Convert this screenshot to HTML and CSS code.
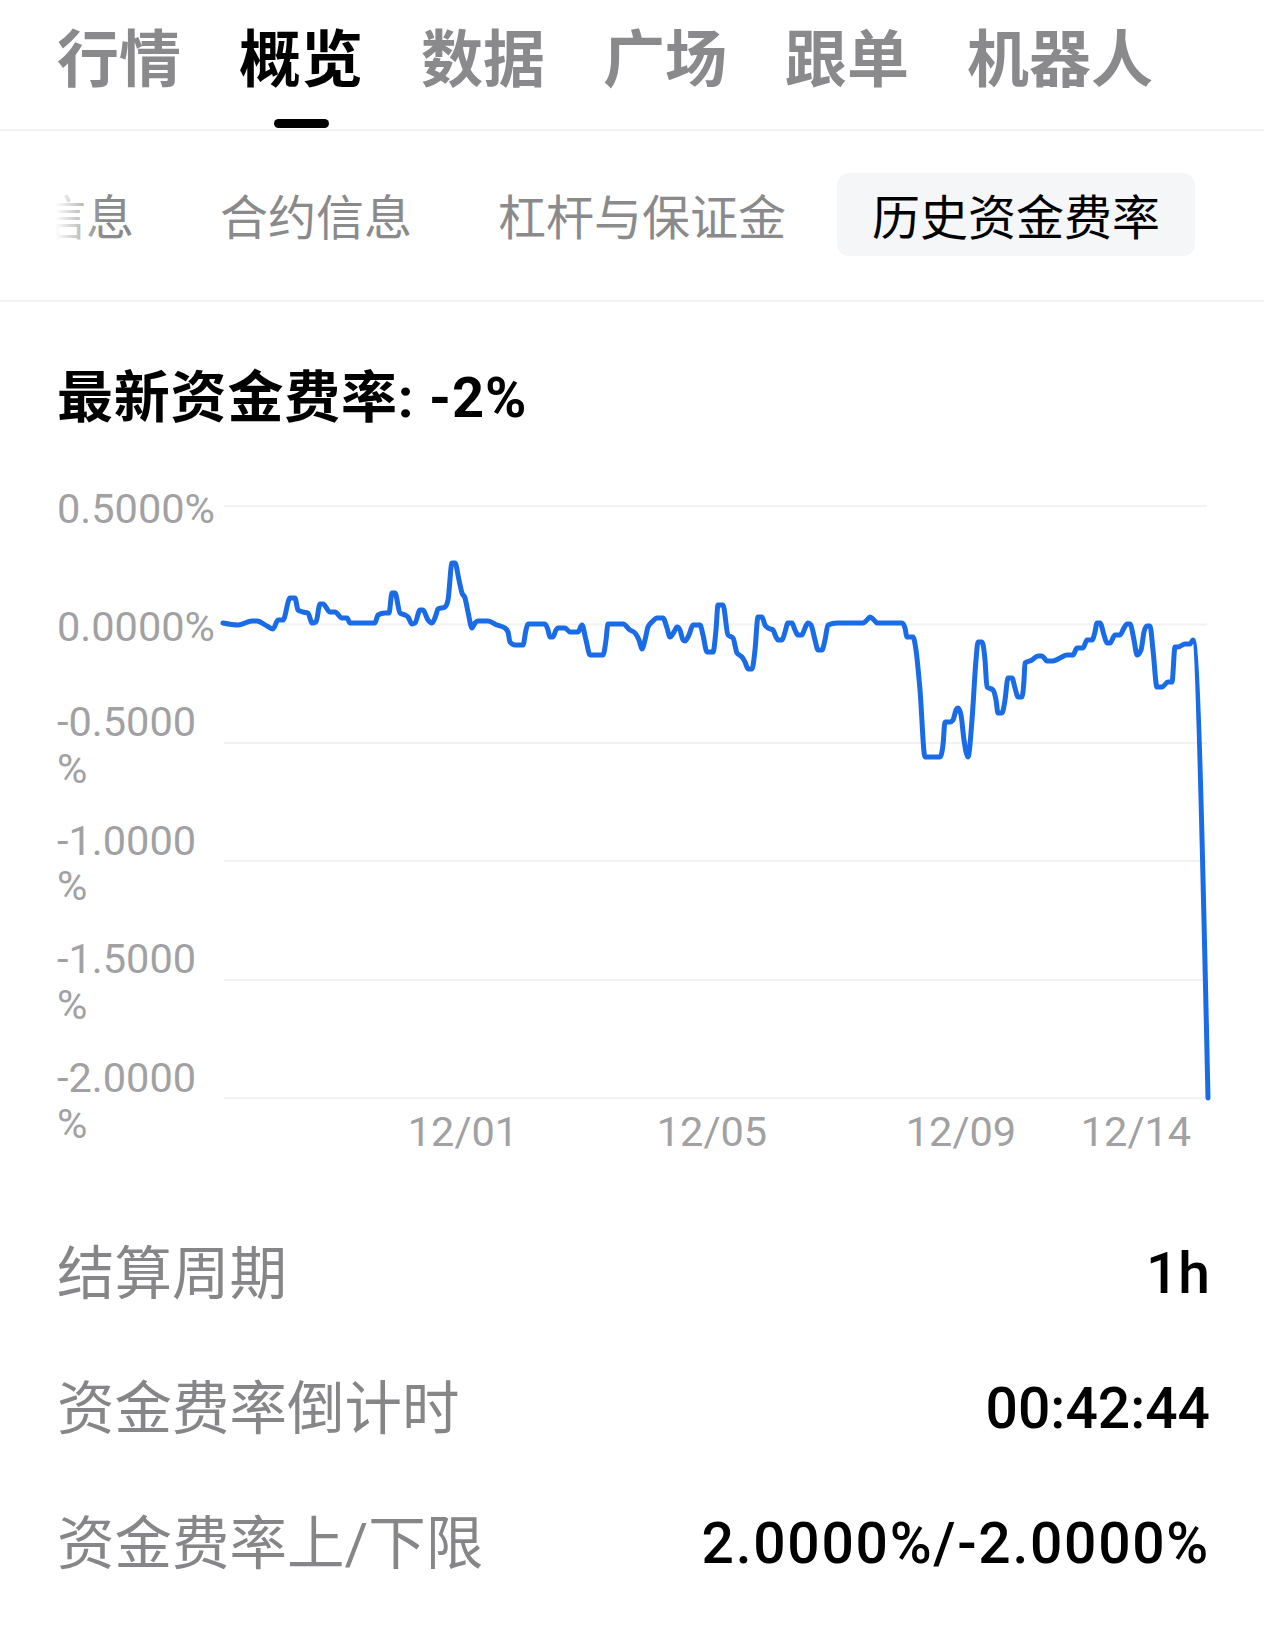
FILE: index.html
```html
<!DOCTYPE html>
<html lang="zh-CN">
<head>
    <meta charset="UTF-8">
    <meta name="viewport" content="width=device-width, initial-scale=1.0">
    <title>历史资金费率</title>
    <link rel="stylesheet" href="styles.css">
</head>
<body>

<!-- Pestañas principales -->
<nav class="main-tabs">
    <a class="main-tab">行情</a>
    <a class="main-tab active">概览</a>
    <a class="main-tab">数据</a>
    <a class="main-tab">广场</a>
    <a class="main-tab">跟单</a>
    <a class="main-tab">机器人</a>
</nav>

<!-- Sub pestañas (desplazadas a la izquierda) -->
<div class="sub-tabs-wrap">
    <div class="sub-tabs">
        <span class="sub-tab">币种信息</span>
        <span class="sub-tab">合约信息</span>
        <span class="sub-tab">杠杆与保证金</span>
        <span class="sub-tab active">历史资金费率</span>
    </div>
</div>

<h2 class="rate-title">最新资金费率: -2%</h2>

<svg class="chart" width="1264" height="720" viewBox="0 440 1264 720">
    <g class="grid">
        <line x1="224" y1="506" x2="1207" y2="506"/>
        <line x1="224" y1="624.5" x2="1207" y2="624.5"/>
        <line x1="224" y1="743" x2="1207" y2="743"/>
        <line x1="224" y1="861" x2="1207" y2="861"/>
        <line x1="224" y1="980" x2="1207" y2="980"/>
        <line x1="224" y1="1098" x2="1207" y2="1098"/>
    </g>
    <g class="axis-label">
        <text x="57" y="523">0.5000%</text>
        <text x="57" y="641">0.0000%</text>
        <text x="57" y="736">-0.5000</text>
        <text x="57" y="783">%</text>
        <text x="57" y="855">-1.0000</text>
        <text x="57" y="900">%</text>
        <text x="57" y="973">-1.5000</text>
        <text x="57" y="1019">%</text>
        <text x="57" y="1092">-2.0000</text>
        <text x="57" y="1138">%</text>
    </g>
    <g class="axis-label x-axis">
        <text x="463" y="1146">12/01</text>
        <text x="712" y="1146">12/05</text>
        <text x="961" y="1146">12/09</text>
        <text x="1136" y="1146">12/14</text>
    </g>
    <path class="rate-line" id="rateLine" data-points="
        223,623 238,625 252,621 257,621 267,626 273,629 278,620 283,620 290,598 295,598 298,610 303,612 308,613
        312,623 316,622 320,604 323,604 330,612 335,612 342,618 347,618 350,623 375,623 378,615 385,613 389,613
        392,593 395,593 400,613 405,615 408,617 412,624 415,623 420,610 423,610 428,620 432,623 436,615 438,609
        445,607 448,600 452,563 455,563 459,580 462,593 465,598 468,612 472,628 475,623 478,621 488,621 497,625
        505,628 508,632 510,642 515,645 523,645 526,630 528,624 545,624 548,630 550,637 553,637 556,630 558,628
        565,628 570,632 578,632 582,625 586,640 590,655 603,655 606,640 608,624 623,624 630,630 635,633 639,640
        642,649 645,640 648,627 652,622 657,618 663,618 667,628 670,637 674,632 677,627 680,630 683,640 685,641
        689,635 693,625 700,625 703,635 707,652 713,652 716,630 718,605 723,605
        728,635 733,638 737,653 742,657 745,662 748,669 752,669 755,650 758,617 762,617 765,625 768,628 773,630
        776,637 778,640 782,640 785,632 788,623 792,623 795,630 798,635 802,635 805,628 808,623 811,625 815,640
        818,650 822,650 825,640 828,625 837,623 863,623 867,620 870,617 874,620 877,623 902,623 905,628 907,637
        913,637 916,650 920,690 925,757 940,757 943,745 945,722 950,722 953,720 956,710 958,708 961,715 964,740
        968,757 972,720 976,660 978,642 982,642 985,660 987,687 993,690 996,700 998,713 1002,713 1005,700
        1008,678 1012,678 1015,688 1018,697 1022,697 1024,680 1025,663 1032,660 1038,656 1042,656 1047,661
        1053,661 1060,658 1067,655 1073,655 1077,648 1083,648 1087,640 1092,640 1095,632 1097,623 1100,623
        1104,635 1107,643 1110,643 1115,635 1120,635 1124,628 1127,624 1130,624 1134,640 1137,655 1141,650
        1144,632 1147,626 1150,626 1153,650 1157,687 1162,687 1168,682 1172,682 1175,647 1178,647 1185,644
        1190,644 1193,640 1208,1098"/>
</svg>

<ul class="info-list">
    <li class="info-row">
        <span class="info-label">结算周期</span>
        <span class="info-value">1h</span>
    </li>
    <li class="info-row">
        <span class="info-label">资金费率倒计时</span>
        <span class="info-value">00:42:44</span>
    </li>
    <li class="info-row">
        <span class="info-label">资金费率上/下限</span>
        <span class="info-value wide">2.0000%/-2.0000%</span>
    </li>
</ul>

<script>
    // Suavizar la línea (interpolación monótona en x)
    function buildSmoothPath(pts) {
        const n = pts.length;
        const t = new Array(n).fill(0);
        for (let i = 1; i < n - 1; i++) {
            const [x0, y0] = pts[i - 1], [x1, y1] = pts[i], [x2, y2] = pts[i + 1];
            const h0 = x1 - x0, h1 = x2 - x1;
            const s0 = (y1 - y0) / h0, s1 = (y2 - y1) / h1;
            const p = (s0 * h1 + s1 * h0) / (h0 + h1);
            t[i] = (Math.sign(s0) + Math.sign(s1)) * Math.min(Math.abs(s0), Math.abs(s1), 0.5 * Math.abs(p)) || 0;
        }
        const slope2 = (a, b, tt) => (3 * (b[1] - a[1]) / (b[0] - a[0]) - tt) / 2;
        t[0] = slope2(pts[0], pts[1], t[1]);
        t[n - 1] = slope2(pts[n - 2], pts[n - 1], t[n - 2]);

        let d = `M${pts[0][0]},${pts[0][1]}`;
        for (let i = 0; i < n - 1; i++) {
            const [x0, y0] = pts[i], [x1, y1] = pts[i + 1];
            const dx = (x1 - x0) / 3;
            d += `C${x0 + dx},${y0 + dx * t[i]} ${x1 - dx},${y1 - dx * t[i + 1]} ${x1},${y1}`;
        }
        return d;
    }

    const line = document.getElementById('rateLine');
    const points = line.dataset.points.trim().split(/\s+/).map(p => p.split(',').map(Number));
    line.setAttribute('d', buildSmoothPath(points));
</script>

</body>
</html>
```

FILE: styles.css
```css
body {
    margin: 0;
    background-color: #fff;
    color: #000;
    font-family: Roboto, "Noto Sans CJK SC", sans-serif;
}

/* Pestañas principales */
.main-tabs {
    display: flex;
    gap: 58px;
    padding: 30px 57px 0;
    border-bottom: 2px solid #f2f2f4;
}
.main-tab {
    display: flex;
    flex-direction: column;
    align-items: center;
    font-size: 62px;
    line-height: 62px;
    font-weight: 700;
    color: #8a8a8c;
}
.main-tab::after {
    content: "";
    width: 55px;
    height: 9px;
    margin-top: 27px;
    margin-bottom: 1px;
    border-radius: 5px;
}
.main-tab.active {
    color: #000;
}
.main-tab.active::after {
    background-color: #000;
}

/* Sub pestañas */
.sub-tabs-wrap {
    position: relative;
    overflow: hidden;
    padding: 42px 0 44px;
    border-bottom: 2px solid #f2f2f4;
}
.sub-tabs-wrap::before {
    content: "";
    position: absolute;
    left: 0;
    top: 0;
    bottom: 0;
    width: 102px;
    background: linear-gradient(to right, #fff 54%, rgba(255, 255, 255, 0));
    z-index: 1;
}
.sub-tabs {
    display: flex;
    gap: 16px;
    margin-left: -93px;
    white-space: nowrap;
}
.sub-tab {
    box-sizing: border-box;
    padding: 9px 35px 0;
    height: 83px;
    line-height: 74px;
    font-size: 48px;
    color: #8a8a8c;
    border-radius: 12px;
}
.sub-tab.active {
    color: #000;
    background-color: #f5f6f8;
}

.rate-title {
    margin: 68px 57px 0;
    font-size: 56px;
    line-height: 56px;
    font-weight: 700;
    letter-spacing: 0.8px;
}

/* Gráfico */
.chart {
    display: block;
    margin-top: 14px;
}
.grid line {
    stroke: #f2f2f3;
    stroke-width: 2;
}
.axis-label {
    font-family: Roboto, sans-serif;
    font-size: 41.5px;
    fill: #a1a1a3;
}
.x-axis {
    text-anchor: middle;
}
.rate-line {
    fill: none;
    stroke: #1a6be6;
    stroke-width: 5;
    stroke-linejoin: round;
    stroke-linecap: round;
}

/* Lista de datos */
.info-list {
    list-style: none;
    margin: 41px 0 0;
    padding: 0 54px 0 57px;
}
.info-row {
    display: flex;
    justify-content: space-between;
    align-items: center;
    height: 135px;
}
.info-label {
    font-size: 57.5px;
    color: #868688;
}
.info-value {
    padding-top: 10px;
    font-size: 57px;
    font-weight: 500;
    color: #000;
}
.info-value.wide {
    letter-spacing: 1.7px;
}
```
